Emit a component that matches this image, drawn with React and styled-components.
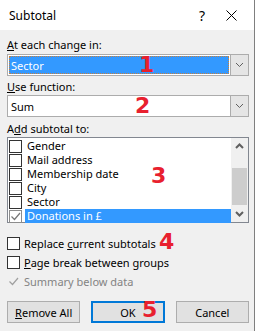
import React from 'react'
import styled, { createGlobalStyle } from 'styled-components'

const Global = createGlobalStyle`
  html, body { margin: 0; padding: 0; background: #fff; }
  body { font-family: 'Noto Sans', 'Open Sans', sans-serif; font-size: 11px; color: #000; }
`

const fields = ['Gender', 'Mail address', 'Membership date', 'City', 'Sector', 'Donations in £']

const Dialog = styled.div`
  position: relative;
  width: 255px;
  height: 331px;
  box-sizing: border-box;
  background: #f0f0f0;
  border-right: 1px solid #7f7f7f;
  display: flex;
  flex-direction: column;
`

const TitleBar = styled.div`
  height: 30px;
  flex: none;
  background: #fff;
  display: flex;
  align-items: center;
  padding-left: 9px;
  font-size: 12px;
`

const Title = styled.span`
  flex: 1;
`

const TitleButton = styled.span`
  width: ${p => p.$w}px;
  display: flex;
  justify-content: center;
  align-items: center;
  font-size: 14px;
`

const Body = styled.div`
  display: flex;
  flex-direction: column;
  padding: 0 5px 0 7px;
`

const Label = styled.div`
  height: 15px;
  line-height: 15px;
  margin-top: ${p => p.$top}px;
  u { text-decoration: underline; text-underline-offset: 1px; }
`

const Combo = styled.div`
  margin-top: ${p => p.$top || 0}px;
  height: 22px;
  box-sizing: border-box;
  border: 1px solid #acacac;
  background: #fff;
  display: flex;
`

const ComboValue = styled.div`
  flex: 1;
  margin: 1px;
  padding-left: 2px;
  display: flex;
  align-items: center;
  background: ${p => (p.$selected ? '#3399ff' : 'transparent')};
  color: ${p => (p.$selected ? '#fff' : '#000')};
  outline: ${p => (p.$selected ? '1px dotted #c8803c' : 'none')};
  outline-offset: -1px;
`

const DropButton = styled.div`
  width: 17px;
  background: #e5e5e5;
  border-left: 1px solid #acacac;
  display: flex;
  align-items: center;
  justify-content: center;
`

const ListBox = styled.div`
  margin-top: 1px;
  height: 86px;
  box-sizing: border-box;
  border: 1px solid #828790;
  background: #fff;
  display: flex;
`

const Rows = styled.div`
  flex: 1;
  padding: 1px 0 0 1px;
`

const ListRow = styled.div`
  height: 14px;
  display: flex;
  align-items: center;
`

const ListText = styled.span`
  flex: 1;
  height: 14px;
  line-height: 14px;
  margin-left: 3px;
  padding-left: 2px;
  background: ${p => (p.$selected ? '#3399ff' : 'transparent')};
  color: ${p => (p.$selected ? '#fff' : '#000')};
`

const Box = styled.span`
  width: 13px;
  height: 13px;
  box-sizing: border-box;
  flex: none;
  border: ${p => (p.$bare ? 'none' : `1px solid ${p.$muted ? '#8c8c8c' : '#333'}`)};
  background: ${p => (p.$bare ? 'transparent' : '#fff')};
  display: flex;
  align-items: center;
  justify-content: center;
`

const ScrollBar = styled.div`
  width: 17px;
  background: #f0f0f0;
  display: flex;
  flex-direction: column;
  align-items: center;
`

const ScrollArrow = styled.div`
  height: 17px;
  display: flex;
  align-items: center;
  justify-content: center;
`

const Thumb = styled.div`
  width: 15px;
  height: 38px;
  margin-top: 13px;
  background: #cdcdcd;
`

const Spacer = styled.div`
  flex: 1;
`

const CheckRow = styled.div`
  height: 19px;
  margin-top: ${p => p.$top || 0}px;
  display: flex;
  align-items: center;
  gap: 4px;
  color: ${p => (p.$disabled ? '#838383' : '#000')};
`

const Buttons = styled.div`
  margin-top: 10px;
  display: grid;
  grid-template-columns: repeat(3, 1fr);
  column-gap: 11px;
`

const Button = styled.div`
  height: 22px;
  box-sizing: border-box;
  border: ${p => (p.$default ? '2px solid #0078d7' : '1px solid #adadad')};
  background: #e1e1e1;
  display: flex;
  align-items: center;
  justify-content: center;
  font-size: 11px;
`

const Marker = styled.span`
  position: absolute;
  left: ${p => p.$x}px;
  top: ${p => p.$y}px;
  font-family: 'DejaVu Sans', sans-serif;
  font-weight: bold;
  font-size: 22px;
  line-height: 22px;
  color: #e8202e;
`

const Chevron = ({ up, bold }) => (
  <svg width="9" height="6" viewBox="0 0 9 6">
    <polyline
      points={up ? '1,5 4.5,1.5 8,5' : '1,1 4.5,4.5 8,1'}
      fill="none"
      stroke="#606060"
      strokeWidth={bold ? 2 : 1}
    />
  </svg>
)

const Check = ({ color = '#333' }) => (
  <svg width="11" height="11" viewBox="0 0 11 11">
    <polyline points="1.5,5.5 4.5,8.5 10,2" fill="none" stroke={color} strokeWidth="1.2" />
  </svg>
)

export default function App() {
  return (
    <>
      <Global />
      <Dialog>
        <TitleBar>
          <Title>Subtotal</Title>
          <TitleButton $w={12}>?</TitleButton>
          <TitleButton $w={46}>
            <svg width="11" height="11" viewBox="0 0 11 11">
              <path d="M0.5 0.5 L10.5 10.5 M10.5 0.5 L0.5 10.5" stroke="#000" strokeWidth="1" />
            </svg>
          </TitleButton>
        </TitleBar>
        <Body>
          <Label $top={7}>
            <u>A</u>t each change in:
          </Label>
          <Combo $top={2}>
            <ComboValue $selected>Sector</ComboValue>
            <DropButton>
              <Chevron />
            </DropButton>
          </Combo>
          <Label $top={3}>
            <u>U</u>se function:
          </Label>
          <Combo $top={1}>
            <ComboValue>Sum</ComboValue>
            <DropButton>
              <Chevron />
            </DropButton>
          </Combo>
          <Label $top={4}>
            A<u>d</u>d subtotal to:
          </Label>
          <ListBox>
            <Rows>
              {fields.map((f, i) => {
                const last = i === fields.length - 1
                return (
                  <ListRow key={f}>
                    <Box $muted={last}>{last && <Check color="#777" />}</Box>
                    <ListText $selected={last}>{f}</ListText>
                  </ListRow>
                )
              })}
            </Rows>
            <ScrollBar>
              <ScrollArrow>
                <Chevron up bold />
              </ScrollArrow>
              <Thumb />
              <Spacer />
              <ScrollArrow>
                <Chevron bold />
              </ScrollArrow>
            </ScrollBar>
          </ListBox>
          <CheckRow $top={11}>
            <Box />
            <span>
              Replace <u>c</u>urrent subtotals
            </span>
          </CheckRow>
          <CheckRow>
            <Box />
            <span>
              <u>P</u>age break between groups
            </span>
          </CheckRow>
          <CheckRow $disabled>
            <Box $bare>
              <Check color="#a0a0a0" />
            </Box>
            <span>Summary below data</span>
          </CheckRow>
          <Buttons>
            <Button>
              <span>
                <u>R</u>emove All
              </span>
            </Button>
            <Button $default>OK</Button>
            <Button>Cancel</Button>
          </Buttons>
        </Body>
        <Marker $x={139} $y={54}>1</Marker>
        <Marker $x={135} $y={95}>2</Marker>
        <Marker $x={151} $y={165}>3</Marker>
        <Marker $x={159} $y={231}>4</Marker>
        <Marker $x={142} $y={299}>5</Marker>
      </Dialog>
    </>
  )
}
